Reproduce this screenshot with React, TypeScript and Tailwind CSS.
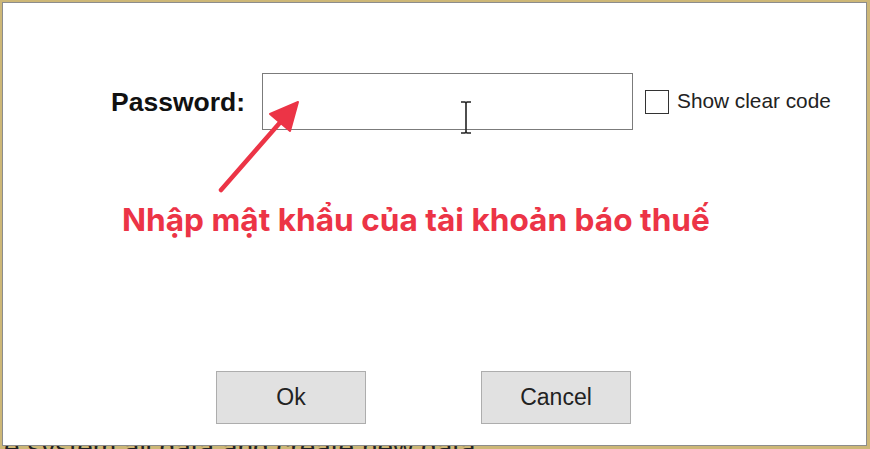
import { useState } from "react"

// Password prompt dialog with a red annotation drawn over it

function Arrow() {
  return (
    <svg
      className="pointer-events-none absolute left-0 top-0"
      width="870"
      height="449"
      viewBox="0 0 870 449"
    >
      <line x1="221" y1="190" x2="284" y2="118" stroke="#ec3446" strokeWidth="4.5" strokeLinecap="round" />
      <polygon points="298,102 290,131 270,114" fill="#ec3446" stroke="#ec3446" strokeWidth="2" strokeLinejoin="round" />
    </svg>
  )
}

function IBeam() {
  return (
    <svg className="pointer-events-none absolute left-[459px] top-[101px]" width="14" height="33" viewBox="0 0 14 33">
      <path d="M2 1h4l1 1 1-1h4M7 2v29M2 32h4l1-1 1 1h4" fill="none" stroke="#222" strokeWidth="1.6" />
    </svg>
  )
}

export default function App() {
  const [checked, setChecked] = useState(false)

  return (
    <div className="relative h-[449px] w-[870px] overflow-hidden bg-[#cdb777] font-['Liberation_Sans',Arial,sans-serif]">
      {/* desktop text peeking out below the window */}
      <div className="absolute left-[4px] top-[434px] whitespace-nowrap text-[28px] leading-none text-[#222]">
        e system all data and create new data
      </div>

      <div className="relative ml-[2px] mt-[2px] flex h-[444px] w-[865px] flex-col border-[1.5px] border-[#8c8c8c] bg-white">
        {/* password row */}
        <div className="mt-[70px] flex items-center">
          <span className="ml-[108px] mt-[2px] text-[26.5px] font-bold leading-none text-[#111]">Password:</span>
          <input
            type={checked ? "text" : "password"}
            className="ml-[17px] h-[57px] w-[371px] border-[1.5px] border-[#7b7b7b] bg-white px-2 text-[22px] outline-none"
          />
          <label className="ml-[12px] flex items-center">
            <span
              onClick={() => setChecked(!checked)}
              className="flex h-[24px] w-[24px] items-center justify-center border-[1.5px] border-[#333] bg-white"
            >
              {checked && <span className="text-[16px] leading-none">✓</span>}
            </span>
            <span className="ml-[8px] text-[20.8px] leading-none text-[#222]">Show clear code</span>
          </label>
        </div>

        {/* annotation */}
        <div className="ml-[119px] mt-[74px] whitespace-nowrap font-['Inter',sans-serif] text-[31.6px] font-bold leading-none text-[#ec3446]">
          Nhập mật khẩu của tài khoản báo thuế
        </div>

        {/* buttons */}
        <div className="mt-auto mb-[21px] ml-[213px] flex gap-[115px]">
          <button className="h-[53px] w-[150px] border border-[#adadad] bg-[#e1e1e1] text-[23px] text-[#222]">
            Ok
          </button>
          <button className="h-[53px] w-[150px] border border-[#adadad] bg-[#e1e1e1] text-[23px] text-[#222]">
            Cancel
          </button>
        </div>
      </div>

      <IBeam />
      <Arrow />
    </div>
  )
}
